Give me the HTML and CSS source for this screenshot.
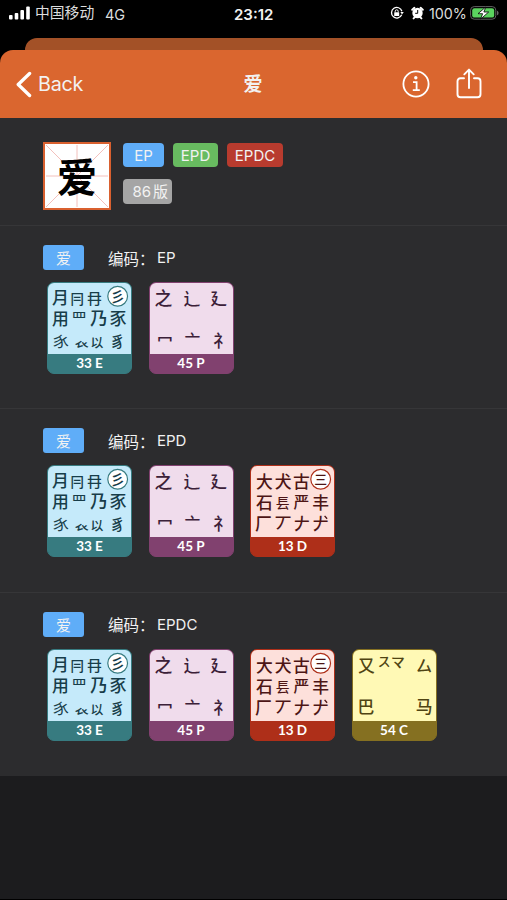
FILE: index.html
```
<!DOCTYPE html>
<html lang="zh-CN">
<head>
<meta charset="utf-8">
<title>爱</title>
<link rel="stylesheet" href="styles.css">
</head>
<body>
<div class="status">
  <svg class="signal" width="22" height="14" viewBox="0 0 22 14" fill="#fff"><rect x="0" y="9" width="3.6" height="4.5" rx="1"/><rect x="5.7" y="7" width="3.6" height="6.5" rx="1"/><rect x="11.4" y="4" width="3.6" height="9.5" rx="1"/><rect x="17.2" y="0.5" width="3.6" height="13" rx="1"/></svg>
  <span class="carrier">中国移动</span><span class="net">4G</span>
  <span class="time">23:12</span>
  <div class="right">
    <svg class="lock" width="14" height="14" viewBox="0 0 14 14" fill="none" stroke="#fff" stroke-width="1.3"><path d="M11.7 8.8A5.3 5.3 0 1 1 11.9 5.2"/><path d="M10.3 6h3.5l-1.8 2.4z" fill="#fff" stroke="none"/><rect x="4.2" y="6.2" width="5" height="3.8" rx=".6" fill="#fff" stroke="none"/><path d="M5.2 6.4V5.3a1.5 1.5 0 0 1 3 0v1.1" stroke-width="1"/></svg>
    <svg class="alarm" width="13" height="14" viewBox="0 0 13 14"><circle cx="6.5" cy="7" r="5.2" fill="#fff"/><path d="M1.2 3.8 3.4 1.8M11.8 3.8 9.6 1.8M2.6 12.4l1.2-1.2m6.6 1.2-1.2-1.2" stroke="#fff" stroke-width="1.9" stroke-linecap="round"/><path d="M6.7 4v3.3H4.2" fill="none" stroke="#000"/></svg>
    <span class="pct">100%</span>
    <svg width="30" height="14" viewBox="0 0 30 14"><rect x=".6" y=".6" width="25.2" height="12.6" rx="3.6" fill="#000" stroke="#626262"/><rect x="2.2" y="2.2" width="22" height="9.4" rx="2.2" fill="#5bd35f"/><path d="M27 4.7c2.1.6 2.1 4 0 4.6z" fill="#666"/><path d="M15.8 1 8 7.7h4.6L10.7 13l8-7h-4.8z" fill="#fff" stroke="#000" stroke-width=".8"/></svg>
  </div>
</div>
<div class="sheet-behind"></div>
<header class="nav">
  <svg class="chev" width="16" height="27" viewBox="0 0 16 27" fill="none" stroke="#fff" stroke-width="3.3" stroke-linecap="round" stroke-linejoin="round"><path d="M13.6 2.5 2.2 13.5l11.4 11"/></svg>
  <span class="back">Back</span>
  <h1>爱</h1>
  <svg class="info" width="28" height="28" viewBox="0 0 28 28" fill="none" stroke="#fff" stroke-width="1.8"><circle cx="14" cy="14" r="12.6"/><circle cx="13.8" cy="7.8" r="1.7" fill="#fff" stroke="none"/><path d="M11 12.2h3.6v7.7M10.8 20.1h7"/></svg>
  <svg class="share" width="26" height="31" viewBox="0 0 26 31" fill="none" stroke="#fff" stroke-width="1.9" stroke-linecap="round" stroke-linejoin="round"><path d="M8 10.3H4.5Q1.5 10.3 1.5 13.3V26.3Q1.5 29.3 4.5 29.3H21.5Q24.5 29.3 24.5 26.3V13.3Q24.5 10.3 21.5 10.3H18M13 20V1.8M8.3 6.3 13 1.6l4.7 4.7"/></svg>
</header>
<main>
<section class="summary">
  <div class="hanzi"><svg width="62" height="62" viewBox="0 0 62 62" stroke="#f3c0bc" stroke-width="1"><path d="M0 0 62 62M62 0 0 62M31 0v62M0 31h62"/></svg><b>爱</b></div>
  <div class="tags">
    <span class="tag blue">EP</span><span class="tag green">EPD</span><span class="tag red">EPDC</span>
    <span class="tag gray">86<i>版</i></span>
  </div>
</section>

<section class="entry">
  <div class="line"><span class="chip">爱</span><span class="code">编码：</span><span class="letters">EP</span></div>
  <div class="keys">
    <div class="key e"><svg class="face" viewBox="0 0 84 70"><circle cx="70.5" cy="12.5" r="10"/><text x="4" y="20.5" font-size="17">月</text><text x="22.5" y="20" font-size="14">冃</text><text x="39.5" y="20.5" font-size="15">冄</text><text x="63" y="18" font-size="15">彡</text><text x="4" y="42" font-size="17">用</text><text x="24" y="41" font-size="15">罒</text><text x="42.5" y="42" font-size="18">乃</text><text x="62.5" y="42" font-size="17">豕</text><text x="5" y="64" font-size="16">𧰨</text><text x="27" y="63" font-size="14">𧘇</text><text x="43" y="63.5" font-size="13">以</text><text x="63" y="64" font-size="15">豸</text></svg><span class="cap">33 E</span></div>
    <div class="key p"><svg class="face" viewBox="0 0 84 70"><text x="4.5" y="21" font-size="18">之</text><text x="34" y="21" font-size="17">辶</text><text x="61" y="21" font-size="17">廴</text><text x="7" y="63" font-size="16">冖</text><text x="35" y="63" font-size="16">亠</text><text x="64" y="64" font-size="17">礻</text></svg><span class="cap">45 P</span></div>
  </div>
</section>

<section class="entry">
  <div class="line"><span class="chip">爱</span><span class="code">编码：</span><span class="letters">EPD</span></div>
  <div class="keys">
    <div class="key e"><svg class="face" viewBox="0 0 84 70"><circle cx="70.5" cy="12.5" r="10"/><text x="4" y="20.5" font-size="17">月</text><text x="22.5" y="20" font-size="14">冃</text><text x="39.5" y="20.5" font-size="15">冄</text><text x="63" y="18" font-size="15">彡</text><text x="4" y="42" font-size="17">用</text><text x="24" y="41" font-size="15">罒</text><text x="42.5" y="42" font-size="18">乃</text><text x="62.5" y="42" font-size="17">豕</text><text x="5" y="64" font-size="16">𧰨</text><text x="27" y="63" font-size="14">𧘇</text><text x="43" y="63.5" font-size="13">以</text><text x="63" y="64" font-size="15">豸</text></svg><span class="cap">33 E</span></div>
    <div class="key p"><svg class="face" viewBox="0 0 84 70"><text x="4.5" y="21" font-size="18">之</text><text x="34" y="21" font-size="17">辶</text><text x="61" y="21" font-size="17">廴</text><text x="7" y="63" font-size="16">冖</text><text x="35" y="63" font-size="16">亠</text><text x="64" y="64" font-size="17">礻</text></svg><span class="cap">45 P</span></div>
    <div class="key d"><svg class="face" viewBox="0 0 84 70"><circle cx="70.5" cy="12.5" r="10"/><text x="5" y="21" font-size="17">大</text><text x="24" y="21" font-size="17">犬</text><text x="42.5" y="21" font-size="17">古</text><text x="64" y="17.5" font-size="13">三</text><text x="5" y="43" font-size="17">石</text><text x="25" y="42" font-size="14">镸</text><text x="43" y="42" font-size="16">严</text><text x="62" y="43" font-size="17">丰</text><text x="4" y="64" font-size="17">厂</text><text x="24" y="64" font-size="17">丆</text><text x="43" y="64" font-size="17">𠂇</text><text x="62" y="64" font-size="17">𠂇</text><path class="dot" d="m74.5 49.5 2.5 3"/></svg><span class="cap">13 D</span></div>
  </div>
</section>

<section class="entry">
  <div class="line"><span class="chip">爱</span><span class="code">编码：</span><span class="letters">EPDC</span></div>
  <div class="keys">
    <div class="key e"><svg class="face" viewBox="0 0 84 70"><circle cx="70.5" cy="12.5" r="10"/><text x="4" y="20.5" font-size="17">月</text><text x="22.5" y="20" font-size="14">冃</text><text x="39.5" y="20.5" font-size="15">冄</text><text x="63" y="18" font-size="15">彡</text><text x="4" y="42" font-size="17">用</text><text x="24" y="41" font-size="15">罒</text><text x="42.5" y="42" font-size="18">乃</text><text x="62.5" y="42" font-size="17">豕</text><text x="5" y="64" font-size="16">𧰨</text><text x="27" y="63" font-size="14">𧘇</text><text x="43" y="63.5" font-size="13">以</text><text x="63" y="64" font-size="15">豸</text></svg><span class="cap">33 E</span></div>
    <div class="key p"><svg class="face" viewBox="0 0 84 70"><text x="4.5" y="21" font-size="18">之</text><text x="34" y="21" font-size="17">辶</text><text x="61" y="21" font-size="17">廴</text><text x="7" y="63" font-size="16">冖</text><text x="35" y="63" font-size="16">亠</text><text x="64" y="64" font-size="17">礻</text></svg><span class="cap">45 P</span></div>
    <div class="key d"><svg class="face" viewBox="0 0 84 70"><circle cx="70.5" cy="12.5" r="10"/><text x="5" y="21" font-size="17">大</text><text x="24" y="21" font-size="17">犬</text><text x="42.5" y="21" font-size="17">古</text><text x="64" y="17.5" font-size="13">三</text><text x="5" y="43" font-size="17">石</text><text x="25" y="42" font-size="14">镸</text><text x="43" y="42" font-size="16">严</text><text x="62" y="43" font-size="17">丰</text><text x="4" y="64" font-size="17">厂</text><text x="24" y="64" font-size="17">丆</text><text x="43" y="64" font-size="17">𠂇</text><text x="62" y="64" font-size="17">𠂇</text><path class="dot" d="m74.5 49.5 2.5 3"/></svg><span class="cap">13 D</span></div>
    <div class="key c"><svg class="face" viewBox="0 0 84 70"><text x="5" y="21" font-size="17">又</text><text x="25" y="15.5" font-size="13">ス</text><text x="38.5" y="16" font-size="14">マ</text><text x="64" y="21" font-size="16">厶</text><text x="4.5" y="63" font-size="17">巴</text><text x="63.5" y="63" font-size="17">马</text></svg><span class="cap">54 C</span></div>
  </div>
</section>
</main>
</body>
</html>
```
FILE: styles.css
```
* { box-sizing: border-box; }
body {
  margin: 0;
  height: 900px;
  overflow: hidden;
  background: #000;
  color: #f2f2f2;
  font-family: Inter, "Noto Sans CJK SC", sans-serif;
  display: flex;
  flex-direction: column;
}
.status {
  height: 38px;
  flex: none;
  display: grid;
  grid-template-columns: 26px 70px 129px 48px 1fr;
  padding: 0 7px 10px 9px;
  align-items: center;
  font-size: 14.8px;
  white-space: nowrap;
}
.signal { margin-top: -2px; }
.time { font-weight: 600; font-size: 15px; }
.net { font-size: 14.5px; color: #ddd; }
.carrier { color: #ddd; line-height: 20px; padding-bottom: 2px; }
.right { display: flex; justify-content: flex-end; align-items: center; margin-top: -2px; }
.lock { margin-right: 1px; }
.alarm { margin: 0 5px 0 6px; }
.pct { width: 38px; margin-right: 3px; font-size: 14.3px; color: #ddd; }
.sheet-behind { height: 12px; flex: none; margin: 0 24px 0 25px; background: #a35127; border-radius: 12px 12px 0 0; }
.nav {
  height: 68px;
  flex: none;
  background: #da662f;
  border-radius: 13px 13px 0 0;
  display: grid;
  grid-template-columns: 22px 171px 88px 1fr 28px 26px;
  align-items: center;
  padding: 0 25px 0 16px;
}
.back { font-size: 19.8px; letter-spacing: -.3px; }
h1 { margin: 0; padding-top: 2px; text-align: center; font-size: 19px; line-height: 24px; }
.info { grid-column: 5; margin-left: -26px; }
.share { margin-top: -1px; }
main { flex: 1; background: #1c1c1e; border-bottom: 1px solid #000; }
.summary {
  height: 108px;
  background: #2c2c2e;
  border-bottom: 1px solid #363638;
  padding: 24px 0 0 43px;
  display: flex;
  gap: 12px;
}
.hanzi { width: 68px; height: 68px; border: 2.5px solid #d9602f; background: #fff; display: grid; place-items: center; overflow: hidden; }
.hanzi > * { grid-area: 1 / 1; }
.hanzi b { color: #000; font-size: 40px; line-height: 58px; padding-top: 4px; }
.tags { display: flex; flex-wrap: wrap; width: 190px; gap: 12px 9px; align-content: flex-start; padding-top: 1px; }
.tag { height: 24px; border-radius: 4px; line-height: 25px; text-align: center; font-size: 15px; }
.blue { width: 41px; background: #5fadf8; }
.green { width: 45px; background: #68bb60; }
.red { width: 56px; background: #b83b2e; }
.gray { width: 49px; height: 25px; background: #a5a5a5; text-align: right; padding-right: 4px; white-space: nowrap; }
.tag i { font-style: normal; margin-left: 2px; }
.entry { height: 183.4px; background: #2c2c2e; border-bottom: 1px solid #363638; padding: 19px 0 0 43px; }
.entry:last-child { border: 0; }
.line { height: 25px; display: flex; align-items: center; font-size: 15px; }
.chip { width: 41px; height: 25px; line-height: 25px; padding-top: 1px; text-align: center; border-radius: 3px; background: #5fadf8; margin-right: 24px; }
.code { width: 49px; white-space: nowrap; font-size: 15.5px; }
.keys { display: flex; gap: 16.5px; padding: 12px 0 0 4px; }
.key { width: 85px; height: 92px; border: 1.5px solid; border-radius: 7px; overflow: hidden; display: flex; flex-direction: column; }
.face { height: 71px; width: 100%; flex: none; display: block; }
.face text { font-family: "Noto Sans CJK SC", sans-serif; font-weight: 500; }
.face circle { fill: #fff; stroke: currentColor; stroke-width: 1.2; }
.dot { fill: none; stroke: #4d1515; stroke-width: 1.4; }
.cap { flex: 1; color: #fff; font: 700 13.5px/19px Lato, sans-serif; text-align: center; }
.e { color: #377b80; border-color: #377b80; background: #377b80; }
.e .face { background: #c5eafa; }
.e text { fill: #173d49; }
.p { color: #81416f; border-color: #81416f; background: #81416f; }
.p .face { background: #f0dcec; }
.p text { fill: #3b2038; }
.d { color: #ae2f19; border-color: #ae2f19; background: #ae2f19; }
.d .face { background: #fde0db; }
.d text { fill: #4d1515; }
.c { color: #857021; border-color: #857021; background: #857021; }
.c .face { background: #fff9b5; }
.c text { fill: #4f4413; }
```
